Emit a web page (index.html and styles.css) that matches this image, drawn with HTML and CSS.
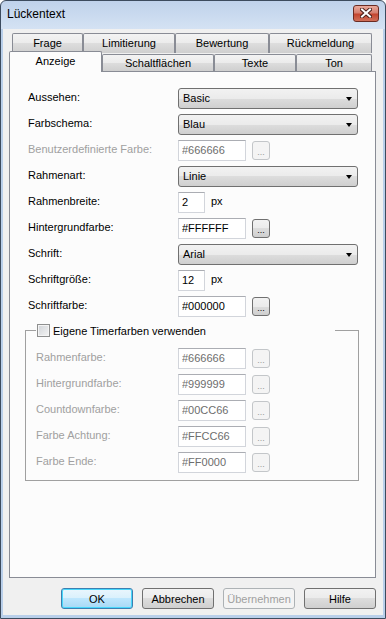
FILE: index.html
```html
<!DOCTYPE html>
<html lang="de">

<head>
    <meta charset="UTF-8">
    <title>Lückentext</title>
    <link rel="stylesheet" href="styles.css">
</head>

<body>
    <div class="window">
        <div class="titlebar">
            <span class="title">Lückentext</span>
            <div class="close">
                <svg width="12" height="10" viewBox="0 0 12 10">
                    <path d="M2 1.5 L10 8.5 M10 1.5 L2 8.5" stroke="#4a1f1a" stroke-width="4" stroke-linecap="square" />
                    <path d="M2 1.5 L10 8.5 M10 1.5 L2 8.5" stroke="#ffffff" stroke-width="2" stroke-linecap="square" />
                </svg>
            </div>
        </div>

        <div class="client">
            <div class="tabs">
                <div class="tabrow back">
                    <div class="tab tab-frage">Frage</div>
                    <div class="tab tab-limit">Limitierung</div>
                    <div class="tab tab-bewertung">Bewertung</div>
                    <div class="tab tab-rueck">Rückmeldung</div>
                </div>
                <div class="tabrow front">
                    <div class="tab active tab-anzeige">Anzeige</div>
                    <div class="tab tab-schalt">Schaltflächen</div>
                    <div class="tab tab-texte">Texte</div>
                    <div class="tab tab-ton">Ton</div>
                </div>
            </div>

            <div class="panel">
                <div class="form">
                    <label>Aussehen:</label>
                    <div class="combo">Basic</div>

                    <label>Farbschema:</label>
                    <div class="combo">Blau</div>

                    <label class="disabled">Benutzerdefinierte Farbe:</label>
                    <div class="field">
                        <input class="color" type="text" value="#666666" disabled>
                        <button class="pick" disabled>...</button>
                    </div>

                    <label>Rahmenart:</label>
                    <div class="combo">Linie</div>

                    <label>Rahmenbreite:</label>
                    <div class="field">
                        <input class="num" type="text" value="2">
                        <span class="unit">px</span>
                    </div>

                    <label>Hintergrundfarbe:</label>
                    <div class="field">
                        <input class="color" type="text" value="#FFFFFF">
                        <button class="pick">...</button>
                    </div>

                    <label>Schrift:</label>
                    <div class="combo">Arial</div>

                    <label>Schriftgröße:</label>
                    <div class="field">
                        <input class="num" type="text" value="12">
                        <span class="unit">px</span>
                    </div>

                    <label>Schriftfarbe:</label>
                    <div class="field">
                        <input class="color" type="text" value="#000000">
                        <button class="pick">...</button>
                    </div>
                </div>

                <fieldset class="timer">
                    <legend><span class="check"></span>Eigene Timerfarben verwenden</legend>
                    <div class="form inner">
                        <label class="disabled">Rahmenfarbe:</label>
                        <div class="field">
                            <input class="color" type="text" value="#666666" disabled>
                            <button class="pick" disabled>...</button>
                        </div>

                        <label class="disabled">Hintergrundfarbe:</label>
                        <div class="field">
                            <input class="color" type="text" value="#999999" disabled>
                            <button class="pick" disabled>...</button>
                        </div>

                        <label class="disabled">Countdownfarbe:</label>
                        <div class="field">
                            <input class="color" type="text" value="#00CC66" disabled>
                            <button class="pick" disabled>...</button>
                        </div>

                        <label class="disabled">Farbe Achtung:</label>
                        <div class="field">
                            <input class="color" type="text" value="#FFCC66" disabled>
                            <button class="pick" disabled>...</button>
                        </div>

                        <label class="disabled">Farbe Ende:</label>
                        <div class="field">
                            <input class="color" type="text" value="#FF0000" disabled>
                            <button class="pick" disabled>...</button>
                        </div>
                    </div>
                </fieldset>
            </div>

            <div class="footer">
                <button class="btn default">OK</button>
                <button class="btn">Abbrechen</button>
                <button class="btn" disabled>Übernehmen</button>
                <button class="btn">Hilfe</button>
            </div>
        </div>
    </div>
</body>

</html>
```

FILE: styles.css
```css
body {
    margin: 0;
    font-family: "Liberation Sans", Arial, sans-serif;
    font-size: 11px;
    color: #000;
}

.window {
    width: 386px;
    height: 619px;
    box-sizing: border-box;
    border: 1px solid #3c4b5e;
    border-radius: 6px 6px 0 0;
    padding: 0 2px 3px 2px;
    display: flex;
    flex-direction: column;
    background: linear-gradient(to bottom, #bfd2eb, #d4e2f3 28px, #b9cfea 28px, #b9cfea);
}

.titlebar {
    height: 28px;
    display: flex;
    align-items: center;
    padding-left: 4px;
}

.title {
    font-size: 12px;
    margin-top: -2px;
}

.close {
    margin-left: auto;
    margin-right: 4px;
    margin-top: -4px;
    width: 26px;
    height: 17px;
    box-sizing: border-box;
    border: 1px solid #6a2b23;
    border-radius: 3px;
    background: linear-gradient(to bottom, #e9a99c, #d67f70 45%, #c4452f 55%, #d0705a);
    display: flex;
    justify-content: center;
    align-items: center;
}

.client {
    flex: 1;
    background-color: #f0f0f0;
    padding: 4px 7px 0 6px;
    display: flex;
    flex-direction: column;
}

.tabrow {
    display: flex;
    align-items: flex-end;
}

.tabrow.back {
    padding-left: 3px;
    height: 20px;
}

.tabrow.front {
    margin-top: -3px;
    height: 21px;
}

.tab {
    box-sizing: border-box;
    height: 17px;
    border: 1px solid #898c95;
    border-bottom: none;
    border-radius: 2px 2px 0 0;
    background: linear-gradient(to bottom, #f3f3f3, #ebebeb 50%, #dddddd 50%, #cfcfcf);
    display: flex;
    justify-content: center;
    align-items: center;
    padding-bottom: 1px;
}

.back .tab {
    height: 20px;
    align-items: flex-start;
    padding-top: 3px;
}

.tab.active {
    height: 21px;
    margin-bottom: -1px;
    position: relative;
    z-index: 1;
    background: #fcfcfc;
    padding-bottom: 3px;
}

.tab-frage { width: 71px; }
.tab-limit { width: 92px; }
.tab-bewertung { width: 94px; }
.tab-rueck { width: 103px; }
.tab-anzeige { width: 93px; }
.tab-schalt { width: 112px; }
.tab-texte { width: 82px; }
.tab-ton { width: 76px; }

.panel {
    height: 507px;
    box-sizing: border-box;
    border: 1px solid #898c95;
    background-color: #fcfcfc;
    padding: 16px 0 0 18px;
}

.form {
    display: grid;
    grid-template-columns: 150px auto;
    grid-auto-rows: 21px;
    row-gap: 5px;
    align-items: center;
}

.form label {
    padding-bottom: 4px;
}

.disabled {
    color: #a0a0a0;
}

.combo {
    width: 180px;
    height: 21px;
    box-sizing: border-box;
    border: 1px solid #707070;
    border-radius: 3px;
    background: linear-gradient(to bottom, #f2f2f2, #ebebeb 50%, #dddddd 50%, #cfcfcf);
    padding-left: 4px;
    padding-bottom: 1px;
    display: flex;
    align-items: center;
    position: relative;
}

.combo::after {
    content: "";
    position: absolute;
    right: 5px;
    top: 8px;
    border-style: solid;
    border-width: 4px 3.5px 0 3.5px;
    border-color: #000 transparent transparent transparent;
}

.field {
    display: flex;
    align-items: center;
}

input {
    height: 21px;
    box-sizing: border-box;
    border: 1px solid #d2d5db;
    border-top-color: #abadb3;
    background: #fff;
    font-family: "Liberation Sans", Arial, sans-serif;
    font-size: 11px;
    padding: 0 3px 1px 3px;
    margin: 0;
    color: #000;
}

input:disabled {
    color: #6d6d6d;
    background: #fff;
}

.color {
    width: 68px;
}

.num {
    width: 27px;
}

.unit {
    margin-left: 6px;
    padding-bottom: 3px;
}

.pick {
    width: 18px;
    height: 19px;
    margin-left: 6px;
    box-sizing: border-box;
    border: 1px solid #707070;
    border-radius: 3px;
    background: linear-gradient(to bottom, #f2f2f2, #ebebeb 50%, #dddddd 50%, #cfcfcf);
    font-family: "Liberation Sans", Arial, sans-serif;
    font-size: 9px;
    padding: 4px 0 0 0;
    color: #000;
    line-height: 1;
}

.pick:disabled {
    border-color: #c3c6c9;
    background: #f4f4f4;
    color: #9a9a9a;
}

.timer {
    margin: 7px 0 0 -3px;
    width: 334px;
    box-sizing: border-box;
    border: 1px solid #a0a0a0;
    border-radius: 0;
    padding: 11px 0 7px 10px;
}

.timer legend {
    width: 299px;
    box-sizing: border-box;
    padding: 0 0 0 1px;
    height: 13px;
    display: flex;
    align-items: center;
    gap: 3px;
}

.check {
    width: 13px;
    height: 13px;
    flex-shrink: 0;
    box-sizing: border-box;
    border: 1px solid #8e8f8f;
    background: linear-gradient(135deg, #d0d3d8, #f4f4f4);
    box-shadow: inset 0 0 0 1px #f4f4f4;
}

.form.inner {
    grid-template-columns: 142px auto;
}

.footer {
    display: flex;
    justify-content: flex-end;
    gap: 9px;
    margin-top: 10px;
}

.btn {
    width: 72px;
    height: 21px;
    box-sizing: border-box;
    border: 1px solid #707070;
    border-radius: 3px;
    background: linear-gradient(to bottom, #f2f2f2, #ebebeb 50%, #dddddd 50%, #cfcfcf);
    font-family: "Liberation Sans", Arial, sans-serif;
    font-size: 11px;
    color: #000;
    padding: 0;
}

.btn.default {
    border-color: #3c7fb1;
    background: linear-gradient(to bottom, #eaf6fd, #d9f0fc 50%, #bee6fd 50%, #a7d9f5);
    box-shadow: inset 0 0 0 1px #48d7fb;
}

.btn:disabled {
    border-color: #adb2b5;
    background: #f4f4f4;
    color: #a0a0a0;
}
```
